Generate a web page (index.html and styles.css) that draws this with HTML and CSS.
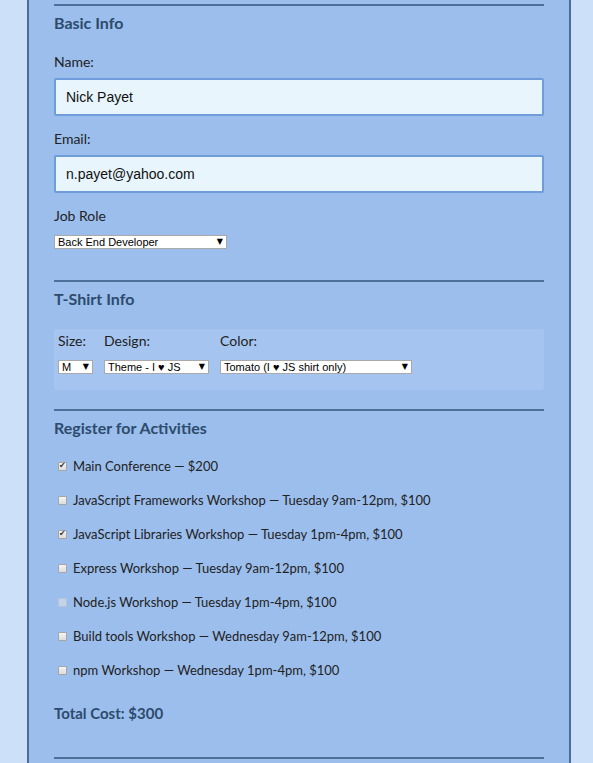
FILE: index.html
```html
<!DOCTYPE html>
<html>
<head>
<meta charset="utf-8">
<link rel="stylesheet" href="styles.css">
</head>
<body>
<div class="page">
  <section class="sec">
    <h2 class="sec-title">Basic Info</h2>
    <label class="lbl lbl-first">Name:</label>
    <input class="txt" type="text" value="Nick Payet">
    <label class="lbl">Email:</label>
    <input class="txt" type="text" value="n.payet@yahoo.com">
    <label class="lbl">Job Role</label>
    <span class="sel sel-job"><select><option>Back End Developer</option></select></span>
  </section>

  <section class="sec sec-shirt">
    <h2 class="sec-title">T-Shirt Info</h2>
    <div class="shirt-box">
      <div class="shirt-col">
        <label class="lbl-s">Size:</label>
        <span class="sel sel-size"><select><option>M</option></select></span>
      </div>
      <div class="shirt-col">
        <label class="lbl-s">Design:</label>
        <span class="sel sel-design"><select><option>Theme - I ♥ JS</option></select></span>
      </div>
      <div class="shirt-col">
        <label class="lbl-s">Color:</label>
        <span class="sel sel-color"><select><option>Tomato (I ♥ JS shirt only)</option></select></span>
      </div>
    </div>
  </section>

  <section class="sec sec-act">
    <h2 class="sec-title">Register for Activities</h2>
    <ul class="acts">
      <li><input type="checkbox" class="cb" checked><span>Main Conference — $200</span></li>
      <li><input type="checkbox" class="cb"><span>JavaScript Frameworks Workshop — Tuesday 9am-12pm, $100</span></li>
      <li><input type="checkbox" class="cb" checked><span>JavaScript Libraries Workshop — Tuesday 1pm-4pm, $100</span></li>
      <li><input type="checkbox" class="cb"><span>Express Workshop — Tuesday 9am-12pm, $100</span></li>
      <li><input type="checkbox" class="cb" disabled><span>Node.js Workshop — Tuesday 1pm-4pm, $100</span></li>
      <li><input type="checkbox" class="cb"><span>Build tools Workshop — Wednesday 9am-12pm, $100</span></li>
      <li><input type="checkbox" class="cb"><span>npm Workshop — Wednesday 1pm-4pm, $100</span></li>
    </ul>
    <p class="total">Total Cost: $300</p>
  </section>
  <section class="sec sec-last"></section>
</div>
</body>
</html>
```

FILE: styles.css
```css
html, body {
  margin: 0;
  padding: 0;
  background: #cce0fa;
  height: 100%;
  overflow: hidden;
}

.page {
  margin-left: 27px;
  width: 490px;
  border-left: 2px solid #4a6f96;
  border-right: 2px solid #4a6f96;
  background: #9bbeed;
  padding: 4px 25px 0 25px;
  min-height: 100%;
  font-family: Lato, "Noto Sans", sans-serif;
  color: #222;
}

.sec {
  border-top: 2px solid #4d7099;
  display: flex;
  flex-direction: column;
  align-items: flex-start;
}

.sec-title {
  margin: 7px 0 0 0;
  font-family: Lato, "Noto Sans", sans-serif;
  font-size: 16px;
  line-height: 20px;
  font-weight: bold;
  color: #2d4b6c;
}

.lbl {
  font-size: 14px;
  line-height: 17px;
  margin-top: 14px;
  color: #222;
}

.lbl-first {
  margin-top: 20px;
}

.txt {
  box-sizing: border-box;
  width: 490px;
  height: 38px;
  margin: 8px 0 0 0;
  border: 2px solid #6f9ddc;
  border-radius: 2px;
  background: #e8f5fc;
  padding: 0 0 0 10px;
  font-family: "Liberation Sans", Arial, sans-serif;
  font-size: 14px;
  color: #111;
  outline: none;
}

.sel {
  position: relative;
  display: inline-block;
}

.sel select {
  appearance: none;
  -webkit-appearance: none;
  box-sizing: border-box;
  height: 14px;
  margin: 0;
  border: 1px solid #a9a9a9;
  border-radius: 0;
  background: #fff;
  padding: 0 0 0 3px;
  font-family: "Liberation Sans", Arial, sans-serif;
  font-size: 11px;
  line-height: 12px;
  color: #000;
  display: block;
}

.sel::after {
  content: "▼";
  position: absolute;
  top: 1px;
  font-family: "DejaVu Sans", sans-serif;
  font-size: 8px;
  line-height: 12px;
  color: #000;
  pointer-events: none;
}

.sel-job {
  margin-top: 11px;
}
.sel-job select { width: 173px; }
.sel-job::after { right: 4px; }

.sel-size select { width: 35px; }
.sel-size::after { right: 4px; }
.sel-design select { width: 105px; }
.sel-design::after { right: 4px; }
.sel-color select { width: 192px; }
.sel-color::after { right: 4px; }

.sec-shirt {
  margin-top: 31px;
}

.shirt-box {
  box-sizing: border-box;
  width: 490px;
  margin-top: 20px;
  background: #a5c5f0;
  border-radius: 3px;
  padding: 3px 4px 16px 4px;
  display: flex;
  gap: 11px;
}

.shirt-col {
  display: flex;
  flex-direction: column;
  align-items: flex-start;
}

.lbl-s {
  font-size: 14px;
  line-height: 18px;
  margin-bottom: 10px;
  color: #222;
}

.sec-act {
  margin-top: 19px;
}

.acts {
  list-style: none;
  margin: 11px 0 0 0;
  padding: 0;
}

.acts li {
  height: 34px;
  display: flex;
  align-items: center;
  font-size: 13px;
  color: #222;
}

.cb {
  appearance: none;
  -webkit-appearance: none;
  box-sizing: border-box;
  width: 9px;
  height: 9px;
  margin: 0 6px 0 4px;
  border: 1px solid #a6a6a6;
  border-radius: 1px;
  background: linear-gradient(#f4f4f4, #dcdcdc);
  position: relative;
}

.cb:checked::after {
  content: "✔";
  position: absolute;
  left: 0;
  top: -3px;
  font-family: "DejaVu Sans", sans-serif;
  font-size: 8px;
  line-height: 12px;
  color: #333;
}

.cb:disabled {
  border-color: #b6c3d6;
  background: #c3d3ea;
}

.total {
  margin: 16px 0 0 0;
  font-size: 15px;
  line-height: 20px;
  font-weight: bold;
  color: #2d4b6c;
}

.sec-last {
  margin-top: 34px;
}
```
